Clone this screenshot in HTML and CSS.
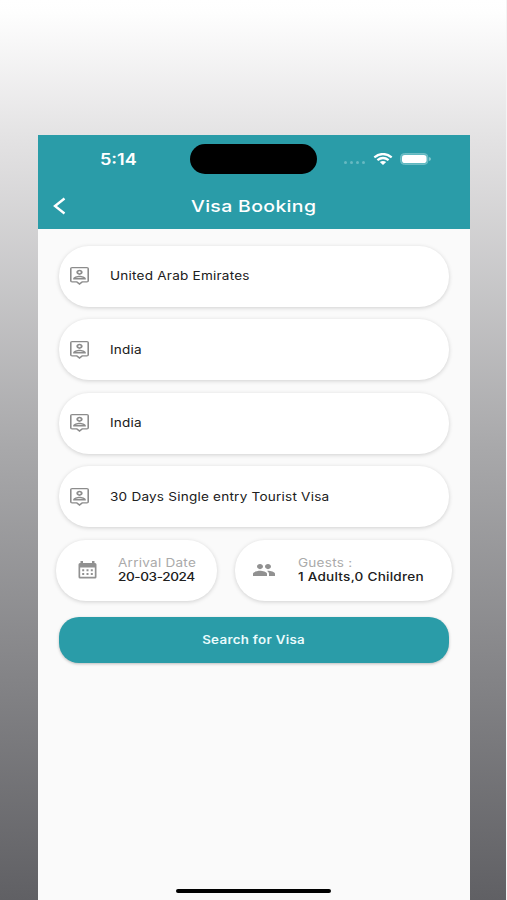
FILE: index.html
```html
<!DOCTYPE html>
<html lang="en">
<head>
<meta charset="utf-8">
<title>Visa Booking</title>
<link rel="stylesheet" href="styles.css">
</head>
<body>
<svg class="defs" width="0" height="0">
  <symbol id="person-pin" viewBox="3 2 18 21" preserveAspectRatio="none">
    <path d="M12 11.2c1.66 0 3-1.34 3-3s-1.34-3-3-3-3 1.34-3 3 1.34 3 3 3zm0-4.2a1.2 1.2 0 1 1 0 2.4A1.2 1.2 0 0 1 12 7zM18 16.6v-.9c0-2.5-3.97-3.58-6-3.58s-6 1.08-6 3.58v.9h12zm-9.7-1.7c.73-.5 2.23-1 3.7-1 1.48 0 2.98.5 3.7 1H8.3zM19 2H5a2 2 0 0 0-2 2v14a2 2 0 0 0 2 2h4l3 3 3-3h4a2 2 0 0 0 2-2V4a2 2 0 0 0-2-2zm.5 16.500h-5.200L12 20.800l-2.300-2.300h-5.200V3.500h15v15z"/>
  </symbol>
</svg>
<main class="phone">
  <header class="header">
    <div class="status">
      <span class="time"><span class="wide">5:14</span></span>
      <span class="island"></span>
      <span class="signal"><i></i><i></i><i></i><i></i></span>
      <svg class="wifi" viewBox="0 0 19 12"><g fill="none" stroke="#fff" stroke-width="2.300"><path d="M.8 4.300Q9.500-2.200 18.200 4.300"/><path d="M3.900 7.200Q9.500 2.800 15.100 7.200"/></g><path fill="#fff" d="M6.300 9Q9.500 6.800 12.700 9L9.500 12z"/></svg>
      <svg class="battery" viewBox="0 0 31 12"><rect x=".5" y=".5" width="27.500" height="11" rx="4" fill="#5fb8c0" stroke="#6fbdc5"/><rect x="2" y="2" width="24.500" height="8" rx="2.800" fill="#fff"/><path fill="#83c7cd" d="M29 4q2 .4 2 2t-2 2z"/></svg>
    </div>
    <div class="title-bar">
      <svg class="back" viewBox="0 0 13 18"><path d="M11.500 1.500 2 9l9.500 7.500" fill="none" stroke="#fff" stroke-width="2.400"/></svg>
      <h1><span class="wide">Visa Booking</span></h1>
    </div>
  </header>
  <form class="form">
    <div class="field"><svg class="pin"><use href="#person-pin"/></svg><span class="wide">United Arab Emirates</span></div>
    <div class="field"><svg class="pin"><use href="#person-pin"/></svg><span class="wide">India</span></div>
    <div class="field"><svg class="pin"><use href="#person-pin"/></svg><span class="wide">India</span></div>
    <div class="field"><svg class="pin"><use href="#person-pin"/></svg><span class="wide">30 Days Single entry Tourist Visa</span></div>
    <div class="pair">
      <div class="half date">
        <svg class="calendar" viewBox="0 0 19 18"><path fill="#919191" fill-rule="evenodd" d="M2.500 0H5v2h9V0h2.500v2H17q1.500 0 1.500 1.500v12.500q0 1.500-1.500 1.500H2Q.5 17.500.5 16V3.500Q.5 2 2 2h.5zM2.200 6.500v9.300h14.600V6.500z"/><g fill="#919191"><path d="M4.200 8.300h2v2h-2zM8.500 8.300h2v2h-2zM12.800 8.300h2v2h-2zM4.200 12h2v2h-2zM8.500 12h2v2h-2zM12.800 12h2v2h-2z"/></g></svg>
        <div class="text"><span class="wide label">Arrival Date</span><span class="wide value">20-03-2024</span></div>
      </div>
      <div class="half guests">
        <svg class="people" viewBox="1 5 22 14" preserveAspectRatio="none"><path fill="#919191" d="M16 11c1.660 0 2.990-1.340 2.990-3S17.660 5 16 5s-3 1.340-3 3 1.340 3 3 3zm-8 0c1.660 0 2.990-1.340 2.990-3S9.660 5 8 5 5 6.340 5 8s1.340 3 3 3zm0 2c-2.330 0-7 1.170-7 3.500V19h14v-2.500c0-2.330-4.670-3.500-7-3.500zm8 0c-.29 0-.62.02-.97.05 1.160.84 1.970 1.970 1.970 3.450V19h6v-2.500c0-2.330-4.670-3.500-7-3.500z"/></svg>
        <div class="text"><span class="wide label">Guests :</span><span class="wide value">1 Adults,0 Children</span></div>
      </div>
    </div>
    <button class="search" type="button"><span class="wide">Search for Visa</span></button>
  </form>
  <div class="home"></div>
</main>
</body>
</html>
```
FILE: styles.css
```css
* { box-sizing: border-box; }
body {
  margin: 0;
  height: 900px;
  overflow: hidden;
  padding: 135px 37px 0 37.5px;
  font-family: Inter, "Liberation Sans", sans-serif;
  background: linear-gradient(to bottom, #fff 0, #fefefe 12px, #e3e2e3 140px, #a8a8aa 450px, #606064 900px);
  border-right: 1px solid #f4f4f4;
}
.defs { position: absolute; }
.phone {
  display: flex;
  flex-direction: column;
  width: 432.5px;
  height: 764.5px;
  background: #fafafa;
}
.header { height: 94px; background: #2a9ca8; color: #fff; }
.status { height: 48px; display: flex; align-items: center; }
.wide { display: inline-block; white-space: nowrap; transform: scaleX(1.18); transform-origin: left center; }
.time { width: 90px; margin: 1px 0 0 62.5px; font-size: 15.3px; font-weight: 600; }
.island { width: 127px; height: 30px; border-radius: 15px; background: #000; }
.signal { display: flex; gap: 3px; margin: 6px 0 0 27px; }
.signal i { width: 3px; height: 3px; border-radius: 50%; background: #67b9c2; }
.wifi { width: 20px; height: 12px; margin: -1px 0 0 7.5px; }
.battery { width: 31px; height: 12px; margin: -1px 0 0 7.5px; }
.title-bar { height: 46px; display: flex; align-items: center; }
.back { width: 13px; height: 18px; margin: 0 0 0 15.5px; }
h1 { margin: 0 0 0 124.5px; font-size: 16.5px; line-height: 22px; font-weight: 500; letter-spacing: .28px; }
.form { margin: 16.9px 21.5px 0 21px; display: flex; flex-direction: column; gap: 12.5px; color: #202020; }
.field {
  height: 61px;
  border-radius: 30px;
  display: flex;
  align-items: center;
  padding-left: 11.5px;
  background: #fff;
  box-shadow: 0 1px 4px rgba(0,0,0,.17);
  font-size: 11.5px;
  letter-spacing: .18px;
}
.pin { width: 19px; height: 18px; margin-right: 20.5px; fill: #8c8c8c; }
.pair { display: flex; gap: 18px; margin: 0 -3px; }
.half { height: 61px; display: flex; align-items: center; border-radius: 30px; background: #fff; box-shadow: 0 1px 4px rgba(0,0,0,.17); }
.date { width: 161px; padding-left: 22px; }
.guests { flex: 1; padding-left: 18px; }
.calendar { width: 19px; height: 18px; }
.people { width: 22px; height: 12px; }
.text { display: flex; flex-direction: column; align-items: flex-start; font-size: 11.5px; line-height: 14px; margin-left: 21.8px; }
.guests .text { margin-left: 23px; }
.label { color: #aaa; letter-spacing: .2px; }
.value { color: #202020; font-weight: 500; }
.date .value { letter-spacing: -.33px; }
.guests .value { letter-spacing: .2px; }
.search {
  height: 46px;
  margin-top: 4px;
  padding: 0;
  border: 0;
  border-radius: 20px;
  background: #2a9ca8;
  color: #e9fbfc;
  font: 600 11.3px Inter, sans-serif;
  letter-spacing: .25px;
  box-shadow: 0 1px 3px rgba(0,0,0,.25);
}
.search .wide { transform-origin: center; }
.home { width: 155px; height: 4px; border-radius: 2px; margin: auto auto 7px; background: #000; }
```
